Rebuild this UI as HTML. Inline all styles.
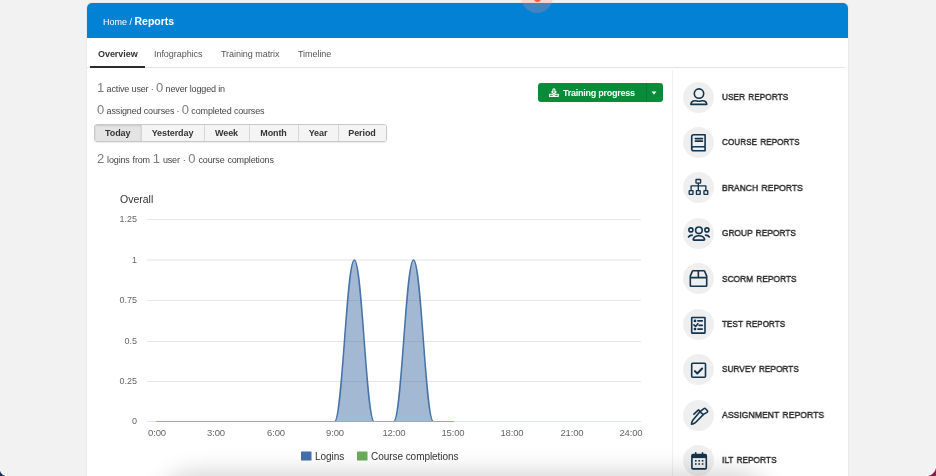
<!DOCTYPE html>
<html><head><meta charset="utf-8">
<style>
*{margin:0;padding:0;box-sizing:border-box}
html,body{width:936px;height:476px;overflow:hidden;background:#f2f2f2;font-family:"Liberation Sans",sans-serif;position:relative}
body>*{will-change:transform}
.a{position:absolute;white-space:nowrap}
#card{position:absolute;left:87px;top:3px;width:761px;height:520px;background:#fff;border-radius:5px 5px 0 0;overflow:hidden;box-shadow:0 0 2px rgba(0,0,0,.12)}
#hdr{position:absolute;left:0;top:0;width:761px;height:35px;background:#0382d5}
.crumb{color:#fff;font-size:9px;top:15px;left:16px;line-height:12px}
.crumb b{font-size:11.5px;letter-spacing:-0.1px}
.tab{font-size:9px;color:#555;top:48px;line-height:12px;letter-spacing:-0.05px}
.stat{color:#444;font-size:9px;letter-spacing:-0.15px;line-height:16px}
.stat .n{font-size:13px;letter-spacing:0;color:#7d7d7d}
.btns{position:absolute;left:94px;top:124px;height:18px;display:flex;border:1px solid #c8c8c8;border-radius:3px;overflow:hidden;box-shadow:0 1px 1px rgba(0,0,0,.08)}
.btns div{height:16px;font-size:9px;letter-spacing:-0.1px;font-weight:bold;color:#333;line-height:16px;text-align:center;background:#f4f4f4;border-left:1px solid #d6d6d6}
.btns div:first-child{border-left:0;background:#e4e4e4;box-shadow:inset 0 1px 2px rgba(0,0,0,.12)}
.side{position:absolute;left:672px;top:70px;width:1px;height:420px;background:#f1f1f1}
.item .c{position:absolute;left:683px;width:31px;height:31px;border-radius:50%;background:#f0f1f2}
.item .c svg{position:absolute;left:5.5px;top:5.5px;width:20px;height:20px}
.item .t{position:absolute;left:722px;font-size:9px;letter-spacing:-0.3px;color:#333;line-height:12px}
.sidet{left:722px;font-size:9.5px;letter-spacing:0.05px;color:#2a2a2a;line-height:12px;-webkit-text-stroke:0.45px #2a2a2a;transform:scaleX(0.885);transform-origin:0 0}
.ylab{position:absolute;font-size:9px;color:#666;text-align:right;width:40px;left:97px;line-height:10px}
.xlab{position:absolute;font-size:9.5px;color:#666;text-align:center;width:40px;line-height:10px;top:428px;letter-spacing:-0.15px}
</style></head><body>
<div id="card">
  <div id="hdr"></div>
</div>
<!-- breadcrumb -->
<div class="a" style="left:103px;top:15px;color:#fff;font-size:9px;line-height:12px">Home / <b style="font-size:10.5px">Reports</b></div>
<!-- tabs -->
<div class="a tab" style="left:98px;font-weight:bold;color:#333">Overview</div>
<div class="a tab" style="left:153.5px">Infographics</div>
<div class="a tab" style="left:221px">Training matrix</div>
<div class="a tab" style="left:298px">Timeline</div>
<div class="a" style="left:87px;top:67px;width:758px;height:1px;background:#e3e3e3"></div>
<div class="a" style="left:90px;top:66px;width:55px;height:2px;background:#2b2b2b"></div>

<!-- stats -->
<div class="a stat" style="left:97px;top:80px"><span class="n">1</span> active user · <span class="n">0</span> never logged in</div>
<div class="a stat" style="left:97px;top:102px"><span class="n">0</span> assigned courses · <span class="n">0</span> completed courses</div>
<div class="btns">
  <div style="width:45.5px">Today</div>
  <div style="width:63px">Yesterday</div>
  <div style="width:45px">Week</div>
  <div style="width:49px">Month</div>
  <div style="width:40px">Year</div>
  <div style="width:48px">Period</div>
</div>
<div class="a stat" style="left:97px;top:151px;word-spacing:0.5px"><span class="n">2</span> logins from <span class="n">1</span> user · <span class="n">0</span> course completions</div>

<!-- training progress button -->
<div class="a" style="left:538px;top:83px;width:125px;height:18.5px;background:#098c39;border-radius:3px"></div>
<div class="a" style="left:646px;top:83px;width:1px;height:19px;background:#087a31"></div>
<div class="a" style="left:563px;top:87px;color:#fff;font-size:9px;font-weight:bold;line-height:12px;letter-spacing:-0.25px">Training progress</div>
<svg class="a" style="left:548px;top:87px" width="12" height="11" viewBox="0 0 12 11" fill="none" stroke="#fff" stroke-width="1.1" stroke-linejoin="round">
  <path d="M4.9 4.9V2.7a1 1 0 0 1 2 0V4.9H8.1L5.9 7L3.7 4.9Z"/><path d="M1.5 7.2H4L5.9 8.4L7.8 7.2H10.3V9.4H1.5Z"/>
</svg>
<svg class="a" style="left:651px;top:91px" width="6" height="4"><path d="M0.5 0.5h5l-2.5 3z" fill="#fff"/></svg>

<!-- sidebar -->
<div class="side"></div>
<div class="a" style="left:683px;top:81.5px;width:31px;height:31px;border-radius:50%;background:#efeff0"></div>
<svg class="a" style="left:683px;top:81.5px" width="31" height="31" viewBox="-15.5 -15.5 31 31" fill="none" stroke="#13344d" stroke-width="1.6" stroke-linecap="round" stroke-linejoin="round"><circle cx="0.5" cy="-3.9" r="4.7"/><path d="M-7.65 6.85H8.35C8.1 4.6 6.5 3.2 4 3.2C2.5 3.2 1.8 3.8 0.35 3.8C-1.1 3.8-1.8 3.2-3.3 3.2C-5.8 3.2-7.4 4.6-7.65 6.85Z"/></svg>
<div class="a sidet" style="top:90.7px;word-spacing:1px;transform:scaleX(0.8665)">USER REPORTS</div>
<div class="a" style="left:683px;top:126.9px;width:31px;height:31px;border-radius:50%;background:#efeff0"></div>
<svg class="a" style="left:683px;top:126.9px" width="31" height="31" viewBox="-15.5 -15.5 31 31" fill="none" stroke="#13344d" stroke-width="1.6" stroke-linecap="round" stroke-linejoin="round"><path d="M6.6 8.2H-4.8a2 2 0 0 1-2-2V-5.8a2 2 0 0 1 2-2H6.6zM-6.8 6.2a2 2 0 0 1 2-2H6.6M-3.2-3.9H4M-3.2-1.4H4"/></svg>
<div class="a sidet" style="top:136.1px;word-spacing:1px;transform:scaleX(0.8565)">COURSE REPORTS</div>
<div class="a" style="left:683px;top:172.4px;width:31px;height:31px;border-radius:50%;background:#efeff0"></div>
<svg class="a" style="left:683px;top:172.4px" width="31" height="31" viewBox="-15.5 -15.5 31 31" fill="none" stroke="#13344d" stroke-width="1.6" stroke-linecap="round" stroke-linejoin="round"><g stroke-width="1.35"><rect x="-2.5" y="-8" width="4.6" height="3.6" rx=".4"/><path d="M-0.2-4.4V3.1M-7.4 3.1V-1.6H7.35V3.1"/><rect x="-9.3" y="3.1" width="3.8" height="3.7" rx=".4"/><rect x="-2.1" y="3.1" width="3.8" height="3.7" rx=".4"/><rect x="5.45" y="3.1" width="3.8" height="3.7" rx=".4"/></g></svg>
<div class="a sidet" style="top:181.6px;word-spacing:1px;transform:scaleX(0.8963)">BRANCH REPORTS</div>
<div class="a" style="left:683px;top:217.9px;width:31px;height:31px;border-radius:50%;background:#efeff0"></div>
<svg class="a" style="left:683px;top:217.9px" width="31" height="31" viewBox="-15.5 -15.5 31 31" fill="none" stroke="#13344d" stroke-width="1.6" stroke-linecap="round" stroke-linejoin="round"><circle cx="0.4" cy="-3.2" r="3.3"/><circle cx="-7.6" cy="-3.6" r="2"/><circle cx="8.4" cy="-3.6" r="2"/><path d="M-4.6 6.6c-.5 0-.8-.4-.7-.9C-4.6 3.2-2.3 2.2 0.4 2.2S5.4 3.2 6.1 5.7c.1.5-.2.9-.7.9z"/><path d="M-10 3.5c.7-1.2 2-1.9 3.8-1.9M10.8 3.5c-.7-1.2-2-1.9-3.8-1.9"/></svg>
<div class="a sidet" style="top:227.1px;word-spacing:1px;transform:scaleX(0.8734)">GROUP REPORTS</div>
<div class="a" style="left:683px;top:263.3px;width:31px;height:31px;border-radius:50%;background:#efeff0"></div>
<svg class="a" style="left:683px;top:263.3px" width="31" height="31" viewBox="-15.5 -15.5 31 31" fill="none" stroke="#13344d" stroke-width="1.6" stroke-linecap="round" stroke-linejoin="round"><path d="M-8.2-2.4L-6.2-7.1a1 1 0 0 1 .9-.6H5.3a1 1 0 0 1 .9.6L8.2-2.4V7a.8.8 0 0 1-.8.8H-7.4a.8.8 0 0 1-.8-.8ZM-8.2-0.9H8.2M-0.15-7.7V-0.9"/></svg>
<div class="a sidet" style="top:272.5px;word-spacing:1px;transform:scaleX(0.8734)">SCORM REPORTS</div>
<div class="a" style="left:683px;top:308.8px;width:31px;height:31px;border-radius:50%;background:#efeff0"></div>
<svg class="a" style="left:683px;top:308.8px" width="31" height="31" viewBox="-15.5 -15.5 31 31" fill="none" stroke="#13344d" stroke-width="1.6" stroke-linecap="round" stroke-linejoin="round"><rect x="-6.8" y="-7" width="13.3" height="15.6" rx=".5"/><path d="M-0.6-3.6H3.8M0.6 0.9H3.8M-0.6 4.6H3.8M-4.6 0.3L-2.9 1.9L-0.6-0.8"/><circle cx="-3.5" cy="-3.6" r=".6"/><circle cx="-3.5" cy="4.6" r=".6"/></svg>
<div class="a sidet" style="top:317.9px;word-spacing:1px;transform:scaleX(0.8525)">TEST REPORTS</div>
<div class="a" style="left:683px;top:354.2px;width:31px;height:31px;border-radius:50%;background:#efeff0"></div>
<svg class="a" style="left:683px;top:354.2px" width="31" height="31" viewBox="-15.5 -15.5 31 31" fill="none" stroke="#13344d" stroke-width="1.6" stroke-linecap="round" stroke-linejoin="round"><rect x="-6.8" y="-6.2" width="13.8" height="14" rx="1"/><path d="M-3.6 1.6l2.4 2.4L3.6-1" stroke-width="2"/></svg>
<div class="a sidet" style="top:363.4px;word-spacing:1px;transform:scaleX(0.8647)">SURVEY REPORTS</div>
<div class="a" style="left:683px;top:399.7px;width:31px;height:31px;border-radius:50%;background:#efeff0"></div>
<svg class="a" style="left:683px;top:399.7px" width="31" height="31" viewBox="-15.5 -15.5 31 31" fill="none" stroke="#13344d" stroke-width="1.6" stroke-linecap="round" stroke-linejoin="round"><path d="M1.2-3.6L-5.5 4.5Q-6.8 6.3-7 8.8Q-4.8 8.6-3.2 7.2L5-1.1ZM1.2-3.6L5.4-6.8a1.2 1.2 0 0 1 1.6 0L8.8-5a1.2 1.2 0 0 1 0 1.6L5-1.1M-4.6-1.4L0-5.6L2.2-3.5"/></svg>
<div class="a sidet" style="top:408.9px;word-spacing:1px;transform:scaleX(0.9045)">ASSIGNMENT REPORTS</div>
<div class="a" style="left:683px;top:445.1px;width:31px;height:31px;border-radius:50%;background:#efeff0"></div>
<svg class="a" style="left:683px;top:445.1px" width="31" height="31" viewBox="-15.5 -15.5 31 31" fill="none" stroke="#13344d" stroke-width="1.6" stroke-linecap="round" stroke-linejoin="round"><rect x="-6.6" y="-6" width="14.4" height="14.4" rx="1.2"/><rect x="-6.6" y="-6" width="14.4" height="3.6" fill="#13344d" stroke="none"/><path d="M-2.8-7.8v2M4-7.8v2"/><g stroke="none" fill="#13344d"><rect x="-3.5" y="-0.5" width="1.6" height="1.6"/><rect x="-0.1" y="-0.5" width="1.6" height="1.6"/><rect x="3.3" y="-0.5" width="1.6" height="1.6"/><rect x="-3.5" y="2.7" width="1.6" height="1.6"/><rect x="-0.1" y="2.7" width="1.6" height="1.6"/><rect x="3.3" y="2.7" width="1.6" height="1.6"/></g></svg>
<div class="a sidet" style="top:454.3px;word-spacing:1px;transform:scaleX(0.8695)">ILT REPORTS</div>
<!-- chart -->
<div class="a" style="left:120px;top:193px;font-size:10.5px;color:#333;line-height:13px">Overall</div>
<svg class="a" style="left:0;top:0" width="936" height="476">
  <g fill="#e6e6e6">
    <rect x="147" y="219" width="494" height="1"/>
    <rect x="147" y="259.5" width="494" height="1"/>
    <rect x="147" y="300" width="494" height="1"/>
    <rect x="147" y="341" width="494" height="1"/>
    <rect x="147" y="381" width="494" height="1"/>
  </g>
  <rect x="147" y="421" width="494" height="1" fill="#dde5ef"/>
  <path d="M 334.60 421.5 C 342.49 421.5 346.44 260 354.33 260 C 362.23 260 366.17 421.5 374.07 421.5 Z M 393.80 421.5 C 401.69 421.5 405.64 260 413.53 260 C 421.43 260 425.37 421.5 433.27 421.5 Z" fill="#4572a7" fill-opacity="0.5"/>
  <path d="M 334.60 421.5 C 342.49 421.5 346.44 260 354.33 260 C 362.23 260 366.17 421.5 374.07 421.5 M 393.80 421.5 C 401.69 421.5 405.64 260 413.53 260 C 421.43 260 425.37 421.5 433.27 421.5" fill="none" stroke="#4572a7" stroke-width="1.5"/>
  <rect x="156" y="421" width="298" height="1" fill="#8abf80"/>
  <rect x="301" y="451.5" width="10.5" height="9" rx="0.6" fill="#4471ab"/>
  <rect x="357" y="451.5" width="10.5" height="9" rx="0.6" fill="#6aad5a"/>
</svg>
<div class="ylab" style="top:214px">1.25</div>
<div class="ylab" style="top:254.5px">1</div>
<div class="ylab" style="top:295px">0.75</div>
<div class="ylab" style="top:336px">0.5</div>
<div class="ylab" style="top:376px">0.25</div>
<div class="ylab" style="top:416px">0</div>
<div class="xlab" style="left:137px">0:00</div>
<div class="xlab" style="left:196px">3:00</div>
<div class="xlab" style="left:255.5px">6:00</div>
<div class="xlab" style="left:314.5px">9:00</div>
<div class="xlab" style="left:374px">12:00</div>
<div class="xlab" style="left:433px">15:00</div>
<div class="xlab" style="left:492px">18:00</div>
<div class="xlab" style="left:551.5px">21:00</div>
<div class="xlab" style="left:610.5px">24:00</div>
<div class="a" style="left:315px;top:451.2px;font-size:10px;color:#333;line-height:12px;letter-spacing:-0.05px">Logins</div>
<div class="a" style="left:370.5px;top:451.2px;font-size:10px;color:#333;line-height:12px;letter-spacing:-0.05px">Course completions</div>

<!-- bottom shadow -->
<div class="a" style="left:165px;top:480px;width:600px;height:60px;border-radius:30px;background:#ddd;box-shadow:0 0 26px 6px rgba(0,0,0,.2)"></div>
<!-- translucent circle top -->
<div class="a" style="left:520.8px;top:-19.2px;width:32px;height:32px;border-radius:50%;background:rgba(247,138,134,.25)"></div>
<div class="a" style="left:533.6px;top:-5.2px;width:6.8px;height:6.8px;border-radius:50%;background:#ff5a30"></div>
<div class="a" style="left:0;top:469px;width:7px;height:7px;background:radial-gradient(circle at 7px 0,transparent 6px,#fff 6.6px,#10305a 7.6px)"></div>
<div class="a" style="left:926px;top:466px;width:10px;height:10px;background:radial-gradient(circle at 0 0,transparent 9px,#fff 9.6px,#8c1d4d 10.6px)"></div>
</body></html>
